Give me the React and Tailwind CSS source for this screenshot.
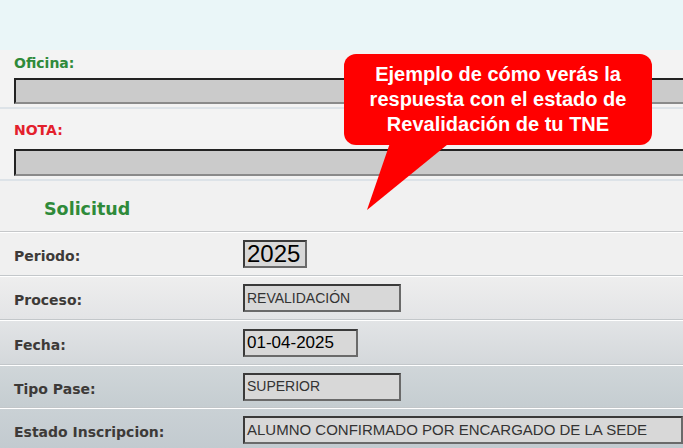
export default function App() {
  const rows = [
    { label: "Periodo:", value: "2025", box: "w-[64px] text-[24px] text-black bg-[#cdcdcd]", h: "h-[44px]", bg: "bg-[#f0f0f0]" },
    { label: "Proceso:", value: "REVALIDACIÓN", box: "w-[158px] text-[14px] text-[#333]", h: "h-[44px]", bg: "bg-gradient-to-b from-[#eeeeee] to-[#e3e4e6]" },
    { label: "Fecha:", value: "01-04-2025", box: "w-[115px] text-[17px] text-black", h: "h-[45px]", bg: "bg-gradient-to-b from-[#e2e4e6] to-[#d4d8db]" },
    { label: "Tipo Pase:", value: "SUPERIOR", box: "w-[158px] text-[14px] text-[#333]", h: "h-[43px]", bg: "bg-gradient-to-b from-[#d0d6d9] to-[#c5cdd1]" },
    { label: "Estado Inscripcion:", value: "ALUMNO CONFIRMADO POR ENCARGADO DE LA SEDE", box: "flex-1 text-[15px] text-[#333]", h: "h-[44px]", bg: "bg-gradient-to-b from-[#cad1d5] to-[#c2cacf]" },
  ];

  return (
    <div className="relative w-full h-[448px] overflow-hidden bg-[#f3f3f3] font-['DejaVu_Sans',sans-serif]">
      {/* top band */}
      <div className="h-[50px] bg-[#eaf6f8]" />

      {/* Oficina */}
      <div className="pl-[14px] pb-[3px] border-b-2 border-[#dde3e8]">
        <div className="mt-[5px] h-[16px] text-[14px] leading-[16px] font-bold text-[#2f8a3a]">Oficina:</div>
        <div className="mt-[7px] h-[26px] w-[700px] bg-[#cbcbcb] border-t-2 border-l-2 border-b-2 border-t-[#222] border-l-[#222] border-b-[#8a8a8a]" />
      </div>

      {/* Nota */}
      <div className="pl-[14px] pb-[3px] border-b-2 border-[#dde3e8]">
        <div className="mt-[13px] h-[16px] text-[14px] leading-[16px] font-bold text-[#e3202c]">NOTA:</div>
        <div className="mt-[11px] h-[27px] w-[700px] bg-[#cbcbcb] border-t-2 border-l-2 border-b-2 border-t-[#222] border-l-[#222] border-b-[#8a8a8a]" />
      </div>

      {/* Solicitud */}
      <div className="pl-[44px] pt-[18px] pb-[12px] border-b border-[#c6c8ca] bg-[#f1f1f1]">
        <div className="h-[20px] text-[17.5px] leading-[20px] font-bold text-[#2f8a3a]">Solicitud</div>
      </div>

      {rows.map((r) => (
        <div key={r.label} className={`flex items-center ${r.h} ${r.bg} border-t border-t-white border-b border-b-[#c3c7ca]`}>
          <div className="w-[243px] pl-[14px] pt-[5px] text-[14px] font-bold text-[#3d3a38]">{r.label}</div>
          <div className={`h-[28px] flex items-center pl-[2px] border-2 border-[#3a3a3a] border-b-[#6a6a6a] border-r-[#6a6a6a] bg-[#d8d8d8] font-['Liberation_Sans',sans-serif] whitespace-nowrap overflow-hidden ${r.box}`}>
            {r.value}
          </div>
        </div>
      ))}

      {/* callout */}
      <div className="absolute left-[344px] top-[54px] w-[308px] h-[91px] rounded-[12px] bg-[#ff0000] flex items-center justify-center">
        <p className="text-center text-white font-bold text-[20px] leading-[25px] font-['Liberation_Sans',sans-serif]">
          Ejemplo de cómo verás la
          <br />
          respuesta con el estado de
          <br />
          Revalidación de tu TNE
        </p>
      </div>
      <svg className="absolute left-0 top-0" width="683" height="448" viewBox="0 0 683 448">
        <polygon points="391,140 453,140 367,210" fill="#ff0000" />
      </svg>
    </div>
  );
}
